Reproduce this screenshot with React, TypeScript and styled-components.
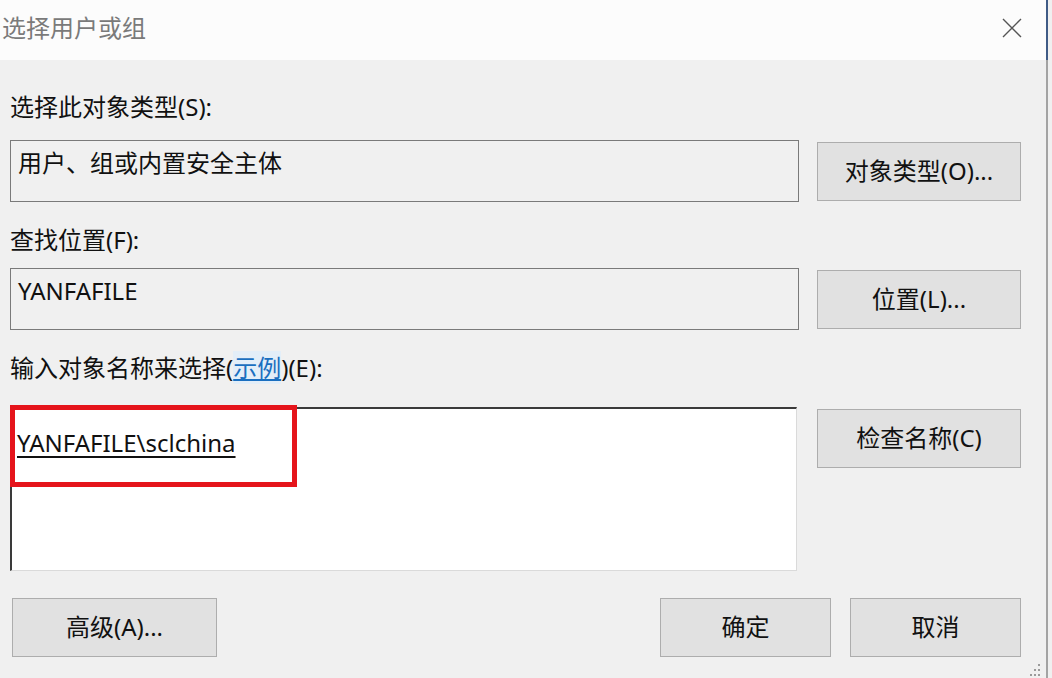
import styled, { createGlobalStyle } from 'styled-components'

const GlobalStyle = createGlobalStyle`
    html, body {
        margin: 0;
        padding: 0;
        background: #f0f0f0;
        overflow: hidden;
    }
    body {
        font-family: 'Noto Sans', 'Noto Sans CJK SC', sans-serif;
        color: #111111;
    }
`

const Frame = styled.div`
    width: 1046px;
    height: 678px;
    border-right: 2px solid #a3a3a3;
    background: #f0f0f0;
    display: flex;
    flex-direction: column;
    position: relative;
`

const TitleBar = styled.div`
    height: 60px;
    background: #fcfcfc;
    margin-right: -2px;
    border-right: 2px solid #3f5b86;
    display: flex;
    align-items: center;
    justify-content: space-between;
    padding: 0 22px 0 2px;
`

const Title = styled.span`
    font-size: 24px;
    color: #7a7a7a;
    line-height: 1;
    margin-top: -4px;
`

const CloseButton = styled.button`
    border: none;
    background: transparent;
    width: 24px;
    height: 24px;
    padding: 0;
    display: flex;
    align-items: center;
    justify-content: center;
    margin-top: -4px;
`

const Body = styled.div`
    flex: 1;
    display: flex;
    flex-direction: column;
    padding: 32px 25px 0 10px;
`

const Label = styled.div<{ $gap: number }>`
    font-size: 24px;
    line-height: 30px;
    height: 30px;
    margin-bottom: ${({ $gap }) => $gap}px;
    white-space: nowrap;
`

const Example = styled.a`
    color: #1a6fc0;
    text-decoration: underline;
    background: #e3eef8;
`

const Row = styled.div<{ $mb: number }>`
    display: grid;
    grid-template-columns: 1fr 204px;
    column-gap: 18px;
    align-items: start;
    margin-bottom: ${({ $mb }) => $mb}px;
`

const ReadField = styled.div`
    height: 62px;
    box-sizing: border-box;
    border: 1px solid #7a7a7a;
    padding: 8px 7px;
    font-size: 24px;
    line-height: 28px;
    white-space: nowrap;
`

const Button = styled.button<{ $w?: number }>`
    width: ${({ $w }) => ($w ? `${$w}px` : '100%')};
    height: 59px;
    margin-top: 2px;
    box-sizing: border-box;
    background: #e1e1e1;
    border: 1px solid #adadad;
    font-family: 'Noto Sans', 'Noto Sans CJK SC', sans-serif;
    font-size: 24px;
    color: #111111;
    display: flex;
    align-items: center;
    justify-content: center;
    padding: 0 0 4px 0;
    white-space: nowrap;
`

const NameBox = styled.div`
    height: 164px;
    margin-right: 2px;
    box-sizing: border-box;
    background: #ffffff;
    border-top: 2px solid #3a3a3a;
    border-left: 2px solid #3a3a3a;
    border-right: 1px solid #dadada;
    border-bottom: 1px solid #dadada;
    padding: 19px 5px;
    font-size: 24px;
    line-height: 30px;
    position: relative;
`

const NameLink = styled.span`
    text-decoration: underline;
    text-underline-offset: 4px;
`

const Highlight = styled.div`
    position: absolute;
    left: -2px;
    top: -4px;
    width: 287px;
    height: 82px;
    box-sizing: border-box;
    border: 5px solid #e5141b;
`

const Footer = styled.div`
    display: flex;
    align-items: center;
    gap: 19px;
    padding-left: 2px;
    margin-top: 25px;
`

const Spacer = styled.div`
    flex: 1;
`

const Grip = styled.svg`
    position: absolute;
    right: 4px;
    bottom: 0;
`

export default function App() {
    return (
        <>
            <GlobalStyle />
            <Frame>
                <TitleBar>
                    <Title>选择用户或组</Title>
                    <CloseButton aria-label='关闭'>
                        <svg width='22' height='22' viewBox='0 0 22 22'>
                            <path
                                d='M2 2 L20 20 M20 2 L2 20'
                                stroke='#555'
                                strokeWidth='1.4'
                                fill='none'
                            />
                        </svg>
                    </CloseButton>
                </TitleBar>
                <Body>
                    <Label $gap={18}>选择此对象类型(S):</Label>
                    <Row $mb={23}>
                        <ReadField>用户、组或内置安全主体</ReadField>
                        <Button>对象类型(O)...</Button>
                    </Row>
                    <Label $gap={13}>查找位置(F):</Label>
                    <Row $mb={23}>
                        <ReadField>YANFAFILE</ReadField>
                        <Button>位置(L)...</Button>
                    </Row>
                    <Label $gap={24}>
                        输入对象名称来选择(<Example href='#'>示例</Example>)(E):
                    </Label>
                    <Row $mb={0}>
                        <NameBox>
                            <NameLink>YANFAFILE\sclchina</NameLink>
                            <Highlight />
                        </NameBox>
                        <Button>检查名称(C)</Button>
                    </Row>
                    <Footer>
                        <Button $w={205}>高级(A)...</Button>
                        <Spacer />
                        <Button $w={171}>确定</Button>
                        <Button $w={171}>取消</Button>
                    </Footer>
                </Body>
                <Grip width='16' height='16' viewBox='0 0 16 16'>
                    <g fill='#9a9a9a'>
                        <rect x='12' y='2' width='2' height='2' />
                        <rect x='8' y='7' width='2' height='2' />
                        <rect x='12' y='7' width='2' height='2' />
                        <rect x='4' y='12' width='2' height='2' />
                        <rect x='8' y='12' width='2' height='2' />
                        <rect x='12' y='12' width='2' height='2' />
                    </g>
                </Grip>
            </Frame>
        </>
    )
}
